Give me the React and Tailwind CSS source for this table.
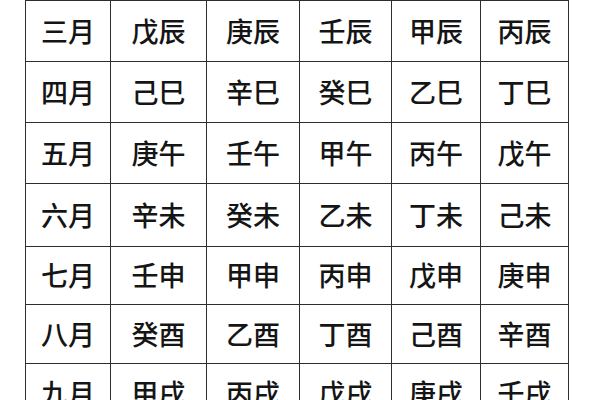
// Largeur des colonnes (classes écrites en entier)
const COLS = ['w-[86px]', 'w-[96px]', 'w-[93px]', 'w-[92px]', 'w-[89px]', 'w-[88px]'];

const ROWS = [
  { h: 'h-[61px]', cells: ['三月', '戊辰', '庚辰', '壬辰', '甲辰', '丙辰'] },
  { h: 'h-[61px]', cells: ['四月', '己巳', '辛巳', '癸巳', '乙巳', '丁巳'] },
  { h: 'h-[61px]', cells: ['五月', '庚午', '壬午', '甲午', '丙午', '戊午'] },
  { h: 'h-[63px]', cells: ['六月', '辛未', '癸未', '乙未', '丁未', '己未'] },
  { h: 'h-[58px]', cells: ['七月', '壬申', '甲申', '丙申', '戊申', '庚申'] },
  { h: 'h-[59px]', cells: ['八月', '癸酉', '乙酉', '丁酉', '己酉', '辛酉'] },
  { h: 'h-[60px]', cells: ['九月', '甲戌', '丙戌', '戊戌', '庚戌', '壬戌'] },
];

export default function App() {
  return (
    <div className="w-[600px] h-[400px] overflow-hidden bg-white pl-[25px] font-['Noto_Sans_CJK_SC','Noto_Sans',sans-serif]">
      <div className="inline-flex flex-col">
        {ROWS.map((row, ri) => (
          <div key={ri} className={`flex border-t border-[#2e2e2e] ${row.h}`}>
            {row.cells.map((text, ci) => (
              <div
                key={ci}
                className={`flex items-center justify-center border-r border-[#2e2e2e] text-[27px] font-medium text-[#151515] ${COLS[ci]} ${
                  ci === 0 ? 'border-l' : ''
                }`}
              >
                {text}
              </div>
            ))}
          </div>
        ))}
      </div>
    </div>
  );
}
